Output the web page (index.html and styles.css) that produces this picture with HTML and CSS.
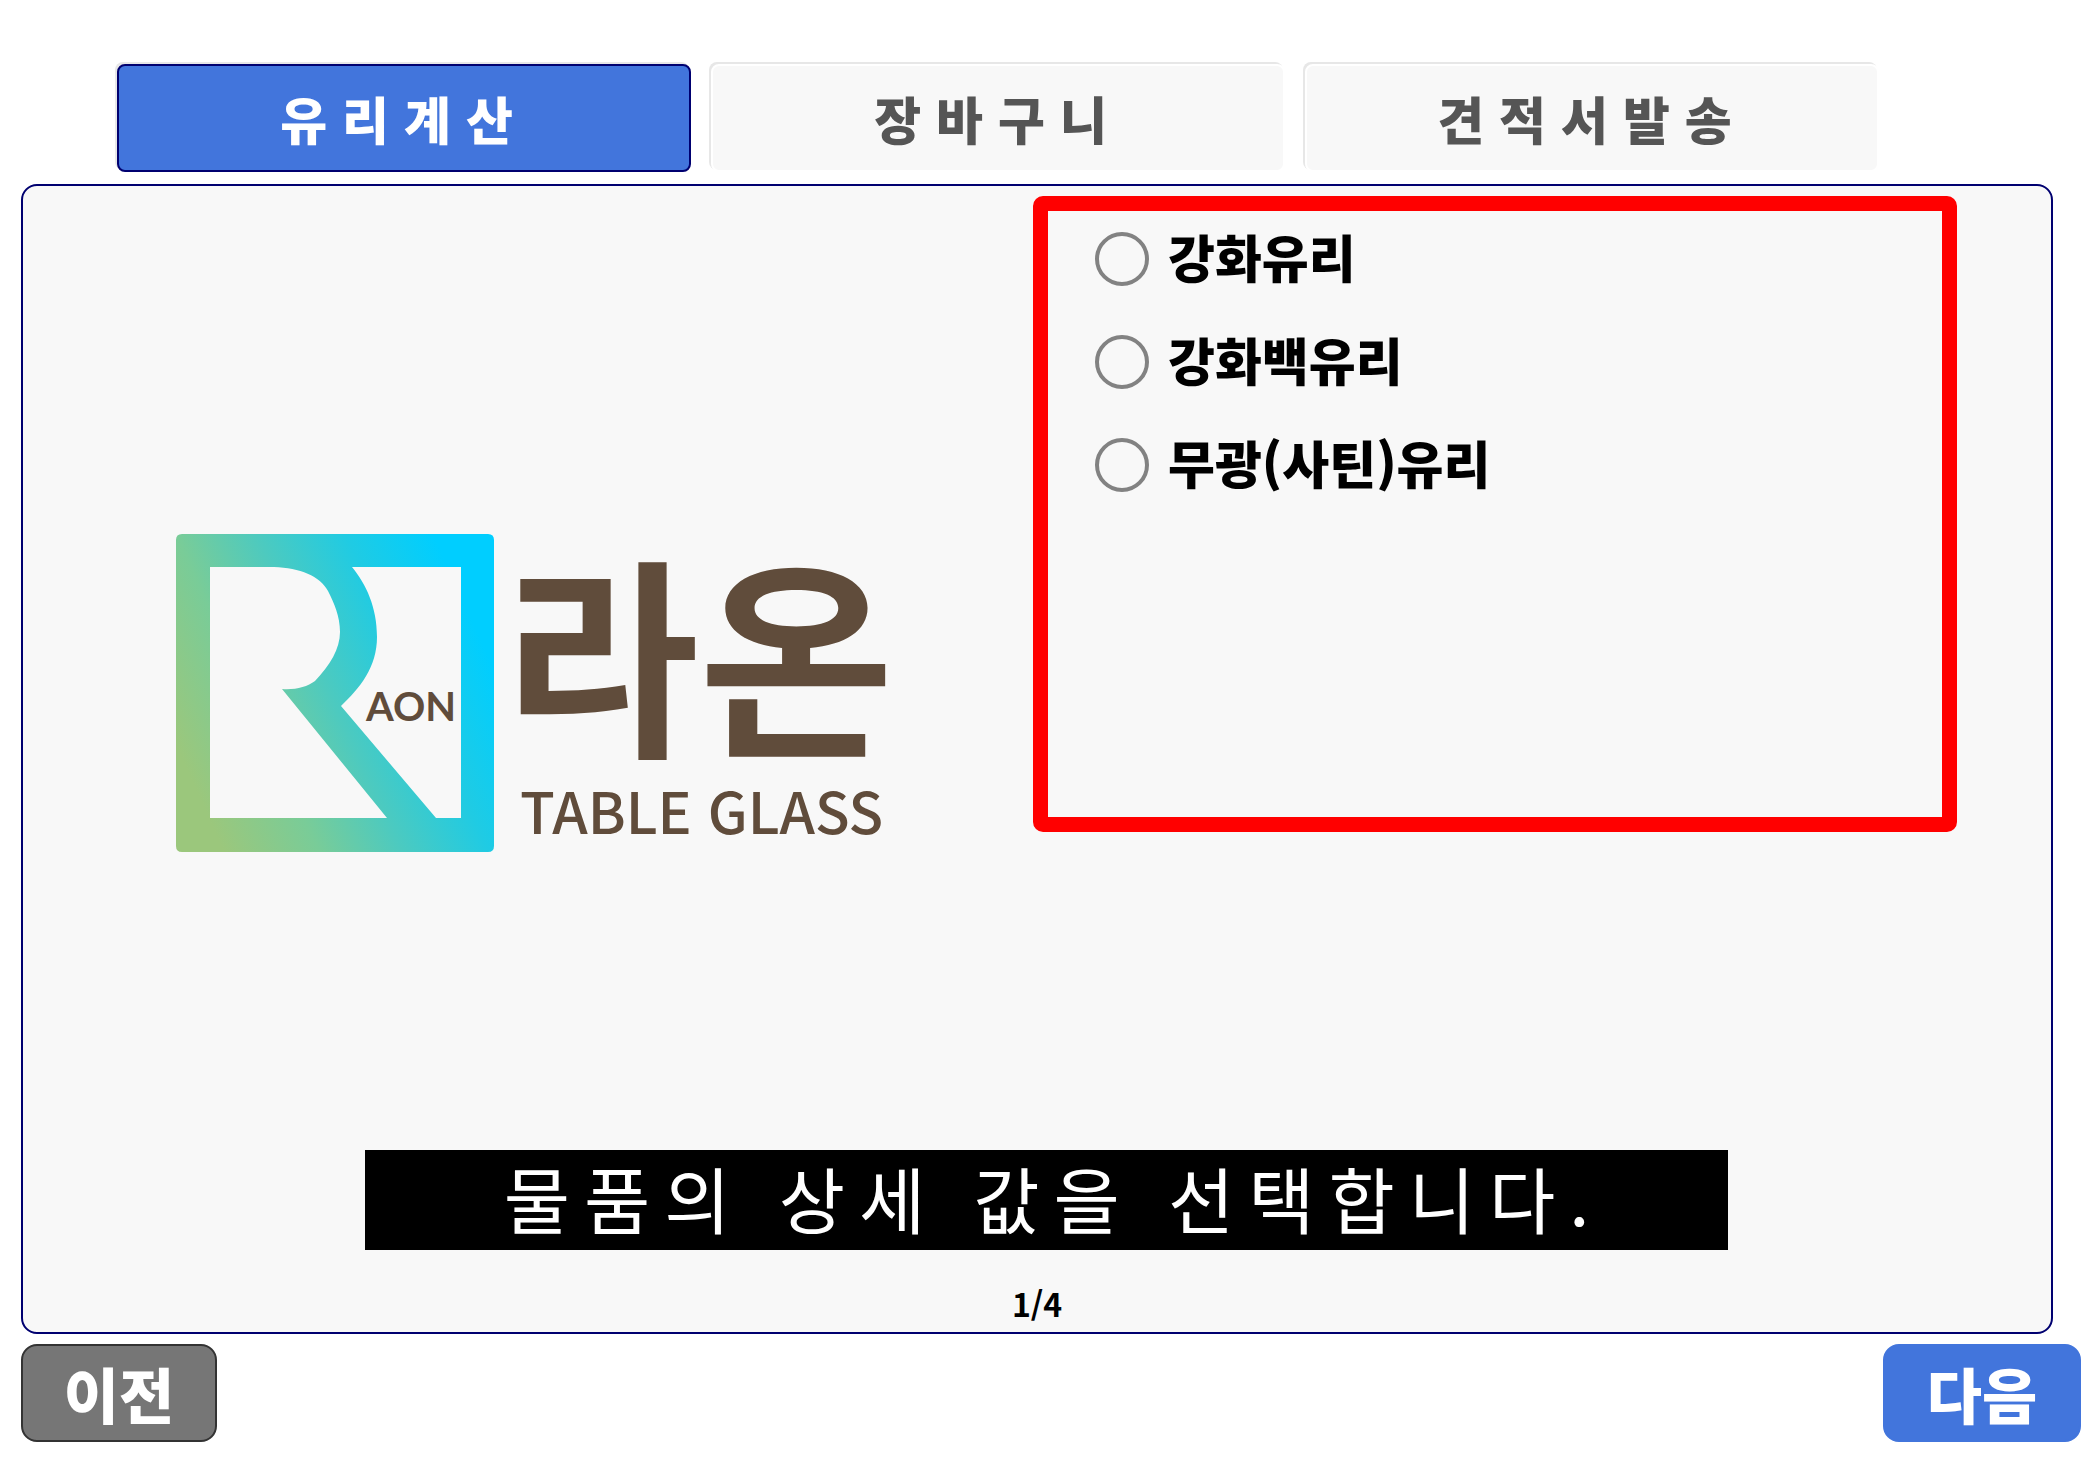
FILE: index.html
```html
<!DOCTYPE html>
<html lang="ko">
<head>
<meta charset="utf-8">
<meta name="viewport" content="width=device-width, initial-scale=1">
<title>라온 TABLE GLASS</title>
<link rel="stylesheet" href="styles.css">
</head>
<body>
<nav class="tabs">
  <button type="button" class="tab tab-active">유리계산</button>
  <button type="button" class="tab">장바구니</button>
  <button type="button" class="tab">견적서발송</button>
</nav>
<main class="panel">
  <div class="content">
    <div class="brand">
      <svg class="logo" viewBox="0 0 708 318" role="img" aria-label="라온 TABLE GLASS">
        <defs>
          <linearGradient id="mark" gradientUnits="userSpaceOnUse" x1="40" y1="300" x2="333" y2="168">
            <stop offset="0" stop-color="#9bc77c"/>
            <stop offset="0.27" stop-color="#79cc98"/>
            <stop offset="0.5" stop-color="#4dcabf"/>
            <stop offset="0.75" stop-color="#20cbe3"/>
            <stop offset="1" stop-color="#00ceff"/>
          </linearGradient>
        </defs>
        <path fill="url(#mark)" fill-rule="evenodd" d="M6 0H312Q318 0 318 6V312Q318 318 312 318H6Q0 318 0 312V6Q0 0 6 0ZM34 33V284H211L106 155C119 156 131 153 139 147C154 131 164 115 164 98C164 82 158 69 152 57C144 42 124 34 98 33ZM176 33C190 50 201 73 201 103C201 133 184 154 165 172L260 284H285V33Z"/>
        <text class="logo-mini" x="190" y="187">AON</text>
        <text class="logo-name" x="328" y="207">라온</text>
        <text class="logo-sub" x="344" y="300">TABLE GLASS</text>
      </svg>
    </div>
    <div class="options" role="radiogroup" aria-label="유리 종류">
      <label class="option"><input type="radio" name="glass"><span class="option-name">강화유리</span></label>
      <label class="option"><input type="radio" name="glass"><span class="option-name">강화백유리</span></label>
      <label class="option"><input type="radio" name="glass"><span class="option-name">무광(사틴)유리</span></label>
    </div>
  </div>
  <p class="caption">물품의 상세 값을 선택합니다.</p>
  <p class="page-number">1/4</p>
</main>
<footer class="actions">
  <button type="button" class="action action-prev">이전</button>
  <button type="button" class="action action-next">다음</button>
</footer>
</body>
</html>
```
FILE: styles.css
```css
* { box-sizing: border-box; }

body {
  margin: 0;
  padding-top: 64px;
  background: #fff;
  color: #000;
  font-family: "Noto Sans CJK KR", sans-serif;
}

button { font-family: inherit; cursor: pointer; }

.tabs {
  display: grid;
  grid-template-columns: repeat(3, 1fr);
  gap: 20px;
  padding: 0 221px 0 117px;
}

.tab {
  height: 108px;
  padding: 0;
  border: 2px solid #fff;
  border-radius: 8px;
  background: #f8f8f8;
  box-shadow: -2px -2px 0 #e7e7e7;
  color: #555;
  font-size: 51px;
  font-weight: 900;
  letter-spacing: 15px;
  line-height: 60px;
}

.tab-active {
  border-color: #000070;
  background: #4275dc;
  color: #fff;
}

.panel {
  margin: 12px 47px 0 21px;
  border: 2px solid #000070;
  border-radius: 16px;
  background: #f8f8f8;
}

.content {
  display: grid;
  grid-template-columns: 1010fr 924fr 94fr;
  align-items: start;
  min-height: 964px;
  padding-top: 10px;
}

.brand {
  display: flex;
  justify-content: center;
  padding: 338px 0 0 4px;
}

.logo { width: 708px; max-width: 100%; height: auto; overflow: visible; }
.logo text { fill: #604c3b; }
.logo-mini { font-family: Lato, sans-serif; font-size: 40px; font-weight: 700; }
.logo-name { font-size: 212px; font-weight: 700; }
.logo-sub { font-size: 57px; font-weight: 500; }

.options {
  display: flex;
  flex-direction: column;
  gap: 49px;
  min-height: 636px;
  padding: 21px 47px;
  border: 15px solid #f00;
  border-radius: 10px;
}

.option {
  display: flex;
  align-items: center;
  gap: 19px;
  height: 54px;
  font-size: 51px;
  font-weight: 900;
  line-height: 54px;
}

.option-name { padding-bottom: 6px; }

.option input {
  appearance: none;
  width: 54px;
  height: 54px;
  margin: 0;
  border: 4px solid #828282;
  border-radius: 50%;
}

.option input:checked { background: radial-gradient(#4275dc 50%, transparent 52%); }

.caption {
  margin: 0 323px 0 342px;
  padding: 0 0 6px 14px;
  background: #000;
  color: #fff;
  font-size: 72px;
  font-weight: 400;
  letter-spacing: 14px;
  line-height: 94px;
  text-align: center;
}

.page-number {
  margin: 0;
  padding: 28px 0 4px;
  font-size: 32px;
  font-weight: 700;
  line-height: 50px;
  text-align: center;
}

.actions {
  display: flex;
  justify-content: space-between;
  padding: 10px 19px 38px 21px;
}

.action {
  width: 198px;
  height: 98px;
  padding: 0;
  border: 2px solid #4275dc;
  border-radius: 16px;
  background: #4275dc;
  color: #fff;
  font-size: 60px;
  font-weight: 900;
  line-height: 80px;
}

.action-prev { width: 196px; border-color: #333; background: #767676; }
```
